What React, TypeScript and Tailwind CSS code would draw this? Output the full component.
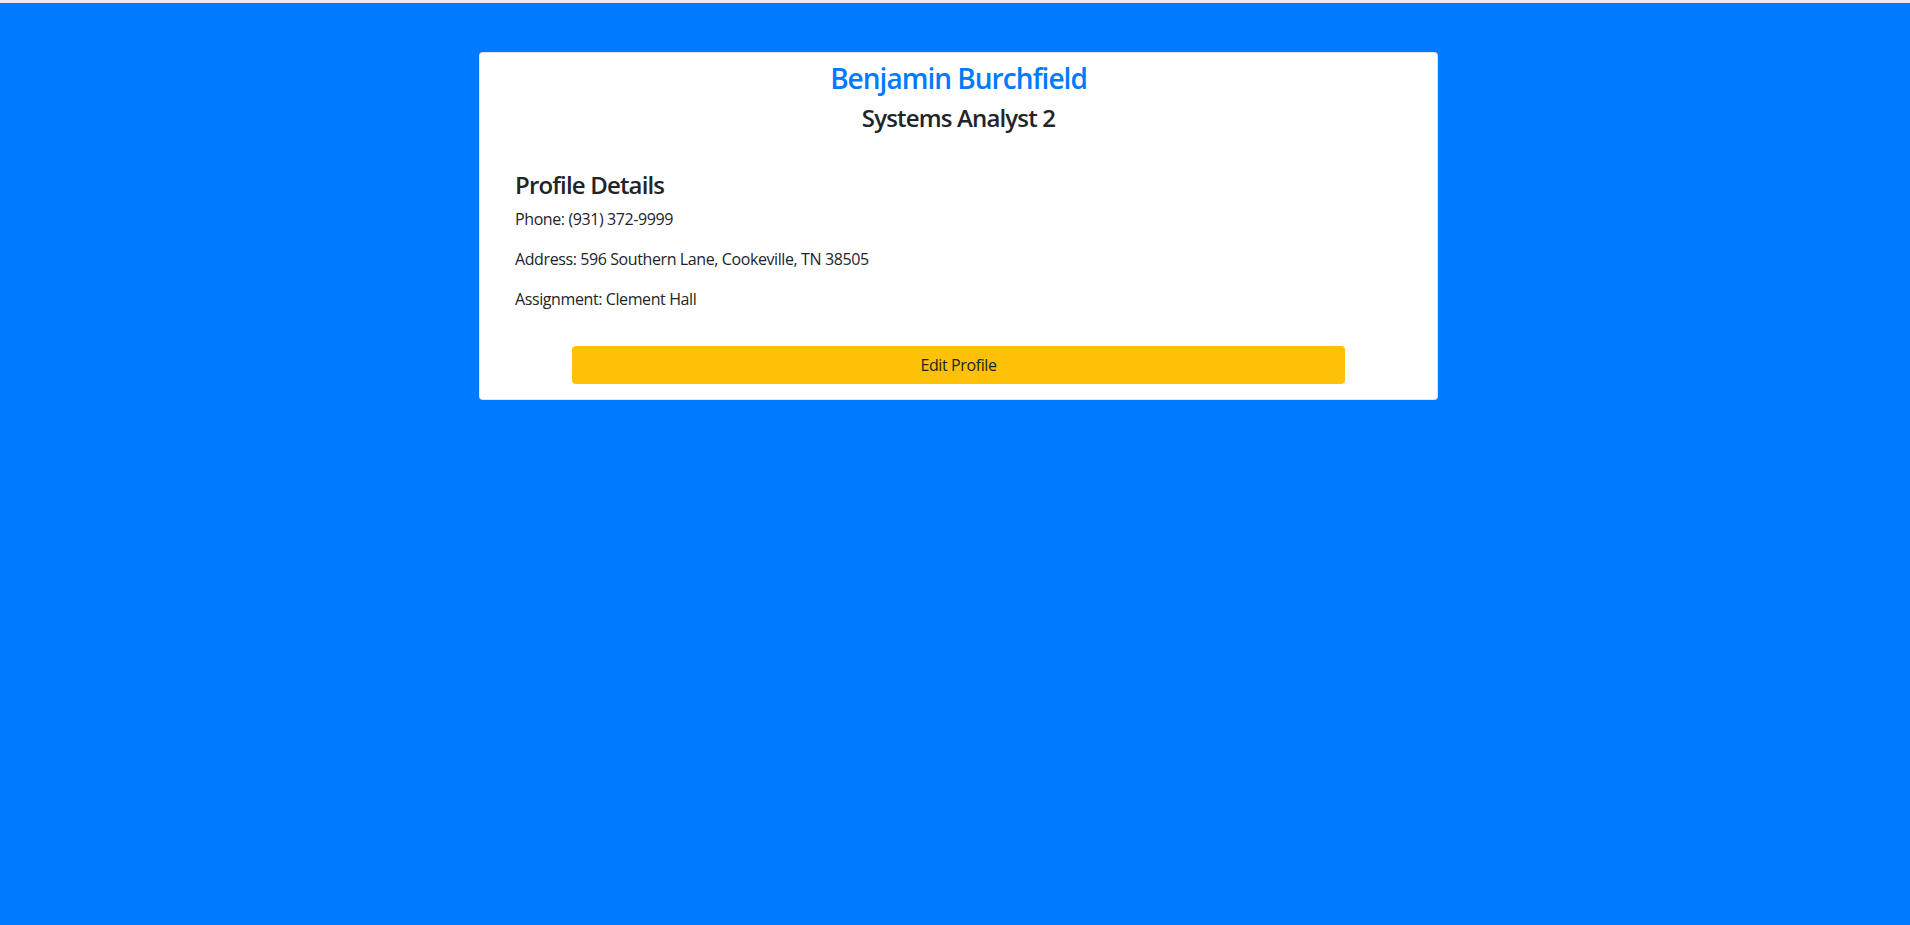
export default function App() {
  return (
    <div className="min-h-[925px] flex flex-col bg-[#007bff] font-['Open_Sans',sans-serif] text-[#212529]">
      <div className="h-[3px] bg-[#ececec]" />
      <main className="flex justify-center pt-[49px] pl-[7px]">
        <section className="w-[959px] bg-white border border-black/10 rounded-[4px] pt-[9px] pb-[15px] px-[35px]">
          <h3 className="text-center text-[28px] leading-[1.2] font-semibold tracking-[-0.035em] text-[#007bff] mb-[8px]">Benjamin Burchfield</h3>
          <h4 className="text-center text-[24px] leading-[1.2] font-semibold tracking-[-0.035em] mb-[8px]">Systems Analyst 2</h4>
          <div className="mt-[39px] text-[16px] leading-[24px] tracking-[-0.025em]">
            <h4 className="text-[24px] leading-[1.2] font-semibold tracking-[-0.035em] mb-[7px]">Profile Details</h4>
            <p className="mb-[16px]">Phone: (931) 372-9999</p>
            <p className="mb-[16px]">Address: 596 Southern Lane, Cookeville, TN 38505</p>
            <p className="mb-[16px]">Assignment: Clement Hall</p>
          </div>
          <div className="flex justify-center pt-[19px]">
            <button className="w-[773px] h-[38px] bg-[#ffc107] rounded-[4px] text-[16px] tracking-[-0.025em] text-[#212529]">Edit Profile</button>
          </div>
        </section>
      </main>
    </div>
  );
}
